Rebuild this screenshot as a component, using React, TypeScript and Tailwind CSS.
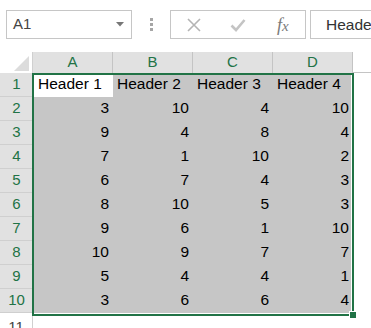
import React from "react";

const GREEN = "#217346";
const data = [
  [3, 10, 4, 10],
  [9, 4, 8, 4],
  [7, 1, 10, 2],
  [6, 7, 4, 3],
  [8, 10, 5, 3],
  [9, 6, 1, 10],
  [10, 9, 7, 7],
  [5, 4, 4, 1],
  [3, 6, 6, 4],
];

export default function App() {
  const font = { fontFamily: '"Liberation Sans", Arial, sans-serif' };
  return (
    <div className="w-[371px] h-[328px] overflow-hidden bg-white relative" style={font}>
      {/* Top bar */}
      <div className="flex items-start h-[52px] pt-[10px]">
        <div className="ml-[6px] w-[126px] h-[29px] border border-[#c6c6c6] flex items-center pl-[6px] pr-[7px] justify-between">
          <span className="text-[15px] text-[#444]">A1</span>
          <svg width="8" height="5" viewBox="0 0 8 5">
            <path d="M0 0 L8 0 L4 4.5 Z" fill="#777" />
          </svg>
        </div>
        <div className="w-[38px] h-[29px] flex flex-col items-center justify-center gap-[2px]">
          <div className="w-[3px] h-[3px] bg-[#a6a6a6]" />
          <div className="w-[3px] h-[3px] bg-[#a6a6a6]" />
          <div className="w-[3px] h-[3px] bg-[#a6a6a6]" />
        </div>
        <div className="w-[136px] h-[29px] border border-[#c6c6c6] flex items-center">
          <div className="w-[45px] flex justify-center ml-[1px]">
            <svg width="14" height="14" viewBox="0 0 14 14">
              <path d="M1 1 L13 13 M13 1 L1 13" stroke="#b4b4b4" strokeWidth="1.6" />
            </svg>
          </div>
          <div className="w-[45px] flex justify-center">
            <svg width="16" height="14" viewBox="0 0 16 14">
              <path d="M1.5 7.5 L6 12 L14.5 2" stroke="#c4c4c4" strokeWidth="2.6" fill="none" />
            </svg>
          </div>
          <div className="w-[45px] flex justify-center">
            <span
              className="text-[18px] italic text-[#7a7a7a] leading-none"
              style={{ fontFamily: '"Liberation Serif", "Times New Roman", serif' }}
            >
              f<span className="text-[15px]">x</span>
            </span>
          </div>
        </div>
        <div className="ml-[4px] h-[29px] flex-1 border border-[#c6c6c6] border-r-0 flex items-center pl-[15px] overflow-hidden">
          <span className="text-[15.5px] text-[#333] whitespace-nowrap">Header 1</span>
        </div>
      </div>

      {/* Sheet */}
      <div className="relative">
        {/* column headers */}
        <div className="flex h-[21px]">
          <div className="w-[33px] h-full bg-white relative border-r border-[#d0d0d0]">
            <svg className="absolute right-[3px] bottom-[2px]" width="15" height="15" viewBox="0 0 15 15">
              <path d="M15 0 L15 15 L0 15 Z" fill="#dcdcdc" />
            </svg>
          </div>
          {["A", "B", "C", "D"].map((c) => (
            <div
              key={c}
              className="w-[80px] h-full bg-[#e1e1e1] border-r border-[#c4c4c4] flex items-center justify-center text-[15px] text-[#217346]"
            >
              {c}
            </div>
          ))}
          <div className="flex-1 border-b border-[#c4c4c4]" />
        </div>
        {/* row 1 */}
        <div className="flex h-[24px]">
          <div className="w-[33px] h-full bg-[#e1e1e1] border-b border-[#cfcfcf] flex items-center justify-center text-[15px] text-[#217346]">
            1
          </div>
          <div className="w-[80px] h-full bg-white flex items-end pb-[2px] pl-[5px] text-[15.5px] text-black whitespace-nowrap">
            Header 1
          </div>
          {["Header 2", "Header 3", "Header 4"].map((h) => (
            <div
              key={h}
              className="w-[80px] h-full bg-[#c6c6c6] flex items-end pb-[2px] pl-[4px] text-[15.5px] text-black whitespace-nowrap"
            >
              {h}
            </div>
          ))}
        </div>
        {data.map((row, i) => (
          <div key={i} className="flex h-[24px]">
            <div className="w-[33px] h-full bg-[#e1e1e1] border-b border-[#cfcfcf] flex items-center justify-center text-[15px] text-[#217346]">
              {i + 2}
            </div>
            {row.map((v, j) => (
              <div
                key={j}
                className="w-[80px] h-full bg-[#c6c6c6] flex items-end justify-end pb-[2px] pr-[4px] text-[15.5px] text-black"
              >
                {v}
              </div>
            ))}
          </div>
        ))}
        {/* row 11 */}
        <div className="flex h-[24px]">
          <div className="w-[33px] h-full bg-white border-r border-[#d0d0d0] flex items-start pt-[3px] justify-center text-[15px] text-[#444]">
            11
          </div>
        </div>

        {/* selection overlay */}
        <div className="absolute left-[32px] top-[21px] w-[322px] h-[243px] border-2 border-[#217346] pointer-events-none">
          <div className="absolute inset-0 border-r border-b border-white" />
        </div>
        <div
          className="absolute left-[349px] top-[259px] w-[8px] h-[8px] border border-white"
          style={{ backgroundColor: GREEN }}
        />
      </div>
    </div>
  );
}
